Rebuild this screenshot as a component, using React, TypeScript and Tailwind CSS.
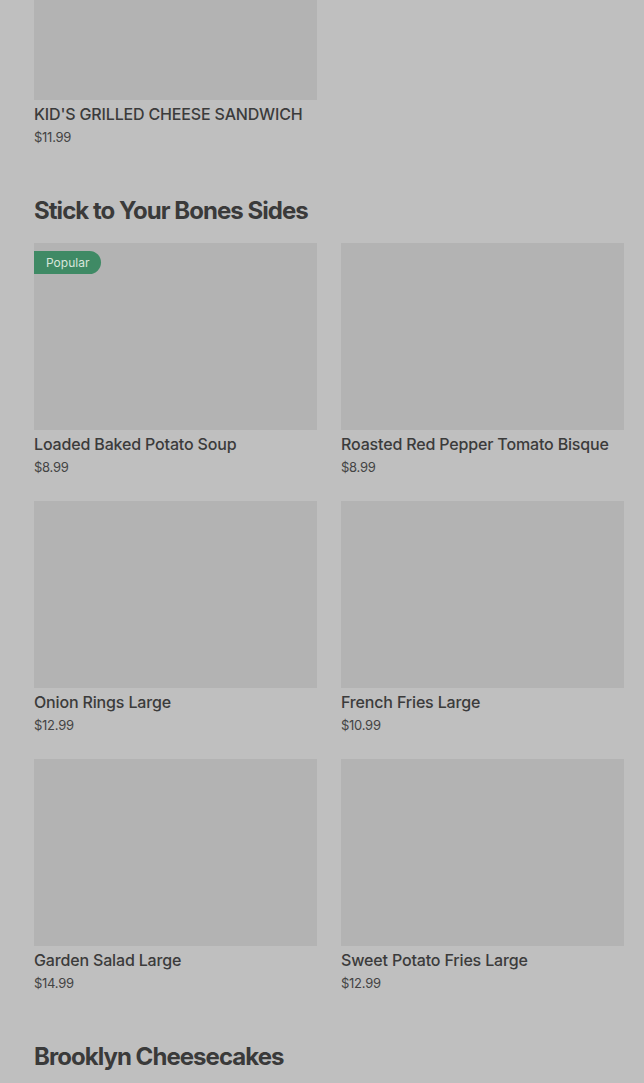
import React from 'react';

interface MenuItem {
    name: string;
    price: string;
    popular?: boolean;
}

interface Section {
    title?: string;
    items: MenuItem[];
}

const sections: Section[] = [
    {
        items: [{ name: "KID'S GRILLED CHEESE SANDWICH", price: '$11.99' }],
    },
    {
        title: 'Stick to Your Bones Sides',
        items: [
            { name: 'Loaded Baked Potato Soup', price: '$8.99', popular: true },
            { name: 'Roasted Red Pepper Tomato Bisque', price: '$8.99' },
            { name: 'Onion Rings Large', price: '$12.99' },
            { name: 'French Fries Large', price: '$10.99' },
            { name: 'Garden Salad Large', price: '$14.99' },
            { name: 'Sweet Potato Fries Large', price: '$12.99' },
        ],
    },
    {
        title: 'Brooklyn Cheesecakes',
        items: [],
    },
];

function MenuCard({ item }: { item: MenuItem }) {
    return (
        <div className="flex flex-col">
            <div className="relative h-[187px] bg-[#b3b3b3]">
                {item.popular && (
                    <span className="absolute left-0 top-2 h-[23px] pl-3 pr-3 flex items-center rounded-r-full bg-[#3f8a65] text-[12px] text-[#d8e6dc]">
                        Popular
                    </span>
                )}
            </div>
            <h3 className="mt-[2px] text-[16px] leading-6 font-medium tracking-[-0.01em] text-[#3b3b3b] truncate">
                {item.name}
            </h3>
            <p className="mt-[1px] text-[13px] leading-5 tracking-[-0.02em] text-[#444]">{item.price}</p>
        </div>
    );
}

export default function App() {
    return (
        <div className="h-[1083px] overflow-hidden bg-[#bfbfbf] font-['Inter',sans-serif]">
            <div className="-mt-[87px] pl-[34px] pr-[20px] flex flex-col gap-[48px]">
                {sections.map((section, i) => (
                    <section key={i} className="flex flex-col">
                        {section.title && (
                            <h2 className="mb-4 text-[24px] leading-8 font-bold tracking-[-0.04em] text-[#3a3a3a]">
                                {section.title}
                            </h2>
                        )}
                        {section.items.length > 0 && (
                            <div className="grid grid-cols-2 gap-6">
                                {section.items.map((item) => (
                                    <MenuCard key={item.name} item={item} />
                                ))}
                            </div>
                        )}
                    </section>
                ))}
            </div>
        </div>
    );
}
